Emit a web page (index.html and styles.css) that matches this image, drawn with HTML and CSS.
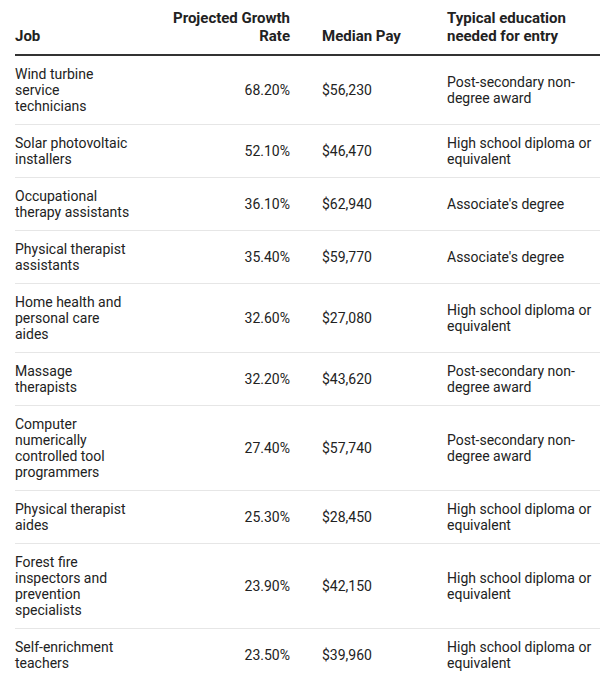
FILE: index.html
```html
<!DOCTYPE html>
<html>
<head>
<meta charset="utf-8">
<link rel="stylesheet" href="styles.css">
</head>
<body>
<table class="jobs">
  <colgroup>
    <col class="c-job"><col class="c-rate"><col class="c-pay"><col class="c-edu">
  </colgroup>
  <thead>
    <tr>
      <th class="job">Job</th>
      <th class="num">Projected Growth Rate</th>
      <th>Median Pay</th>
      <th class="edu">Typical education needed for entry</th>
    </tr>
  </thead>
  <tbody>
    <tr><td class="job">Wind turbine service technicians</td><td class="num">68.20%</td><td>$56,230</td><td class="edu">Post-secondary non-degree award</td></tr>
    <tr><td class="job">Solar photovoltaic installers</td><td class="num">52.10%</td><td>$46,470</td><td class="edu">High school diploma or equivalent</td></tr>
    <tr><td class="job">Occupational therapy assistants</td><td class="num">36.10%</td><td>$62,940</td><td class="edu">Associate's degree</td></tr>
    <tr><td class="job">Physical therapist assistants</td><td class="num">35.40%</td><td>$59,770</td><td class="edu">Associate's degree</td></tr>
    <tr><td class="job">Home health and personal care aides</td><td class="num">32.60%</td><td>$27,080</td><td class="edu">High school diploma or equivalent</td></tr>
    <tr><td class="job">Massage therapists</td><td class="num">32.20%</td><td>$43,620</td><td class="edu">Post-secondary non-degree award</td></tr>
    <tr><td class="job">Computer numerically controlled tool programmers</td><td class="num">27.40%</td><td>$57,740</td><td class="edu">Post-secondary non-degree award</td></tr>
    <tr><td class="job">Physical therapist aides</td><td class="num">25.30%</td><td>$28,450</td><td class="edu">High school diploma or equivalent</td></tr>
    <tr><td class="job">Forest fire inspectors and prevention specialists</td><td class="num">23.90%</td><td>$42,150</td><td class="edu">High school diploma or equivalent</td></tr>
    <tr><td class="job">Self-enrichment teachers</td><td class="num">23.50%</td><td>$39,960</td><td class="edu">High school diploma or equivalent</td></tr>
  </tbody>
</table>
</body>
</html>
```
FILE: styles.css
```css
html, body {
  margin: 0;
  padding: 0;
  background: #fff;
}
body {
  font-family: Roboto, "Liberation Sans", sans-serif;
  color: #222;
}
.jobs {
  margin: 0 0 0 15px;
  width: 585px;
  table-layout: fixed;
  border-collapse: collapse;
  font-size: 14px;
}
.c-job { width: 135px; }
.c-rate { width: 156px; }
.c-pay { width: 125px; }
.c-edu { width: 169px; }
.jobs th {
  font-size: 15px;
  font-weight: 700;
  line-height: 18px;
  text-align: left;
  vertical-align: bottom;
  padding: 9px 16px 9px 16px;
  border-bottom: 2px solid #333;
}
.jobs td {
  line-height: 16px;
  text-align: left;
  vertical-align: middle;
  padding: 10px 16px;
  border-bottom: 1px solid #e6e6e6;
}
.jobs tbody tr:last-child td { border-bottom: none; }
.jobs .job { padding-left: 0; }
.jobs .edu { padding-right: 0; }
.jobs .num { text-align: right; }
```
